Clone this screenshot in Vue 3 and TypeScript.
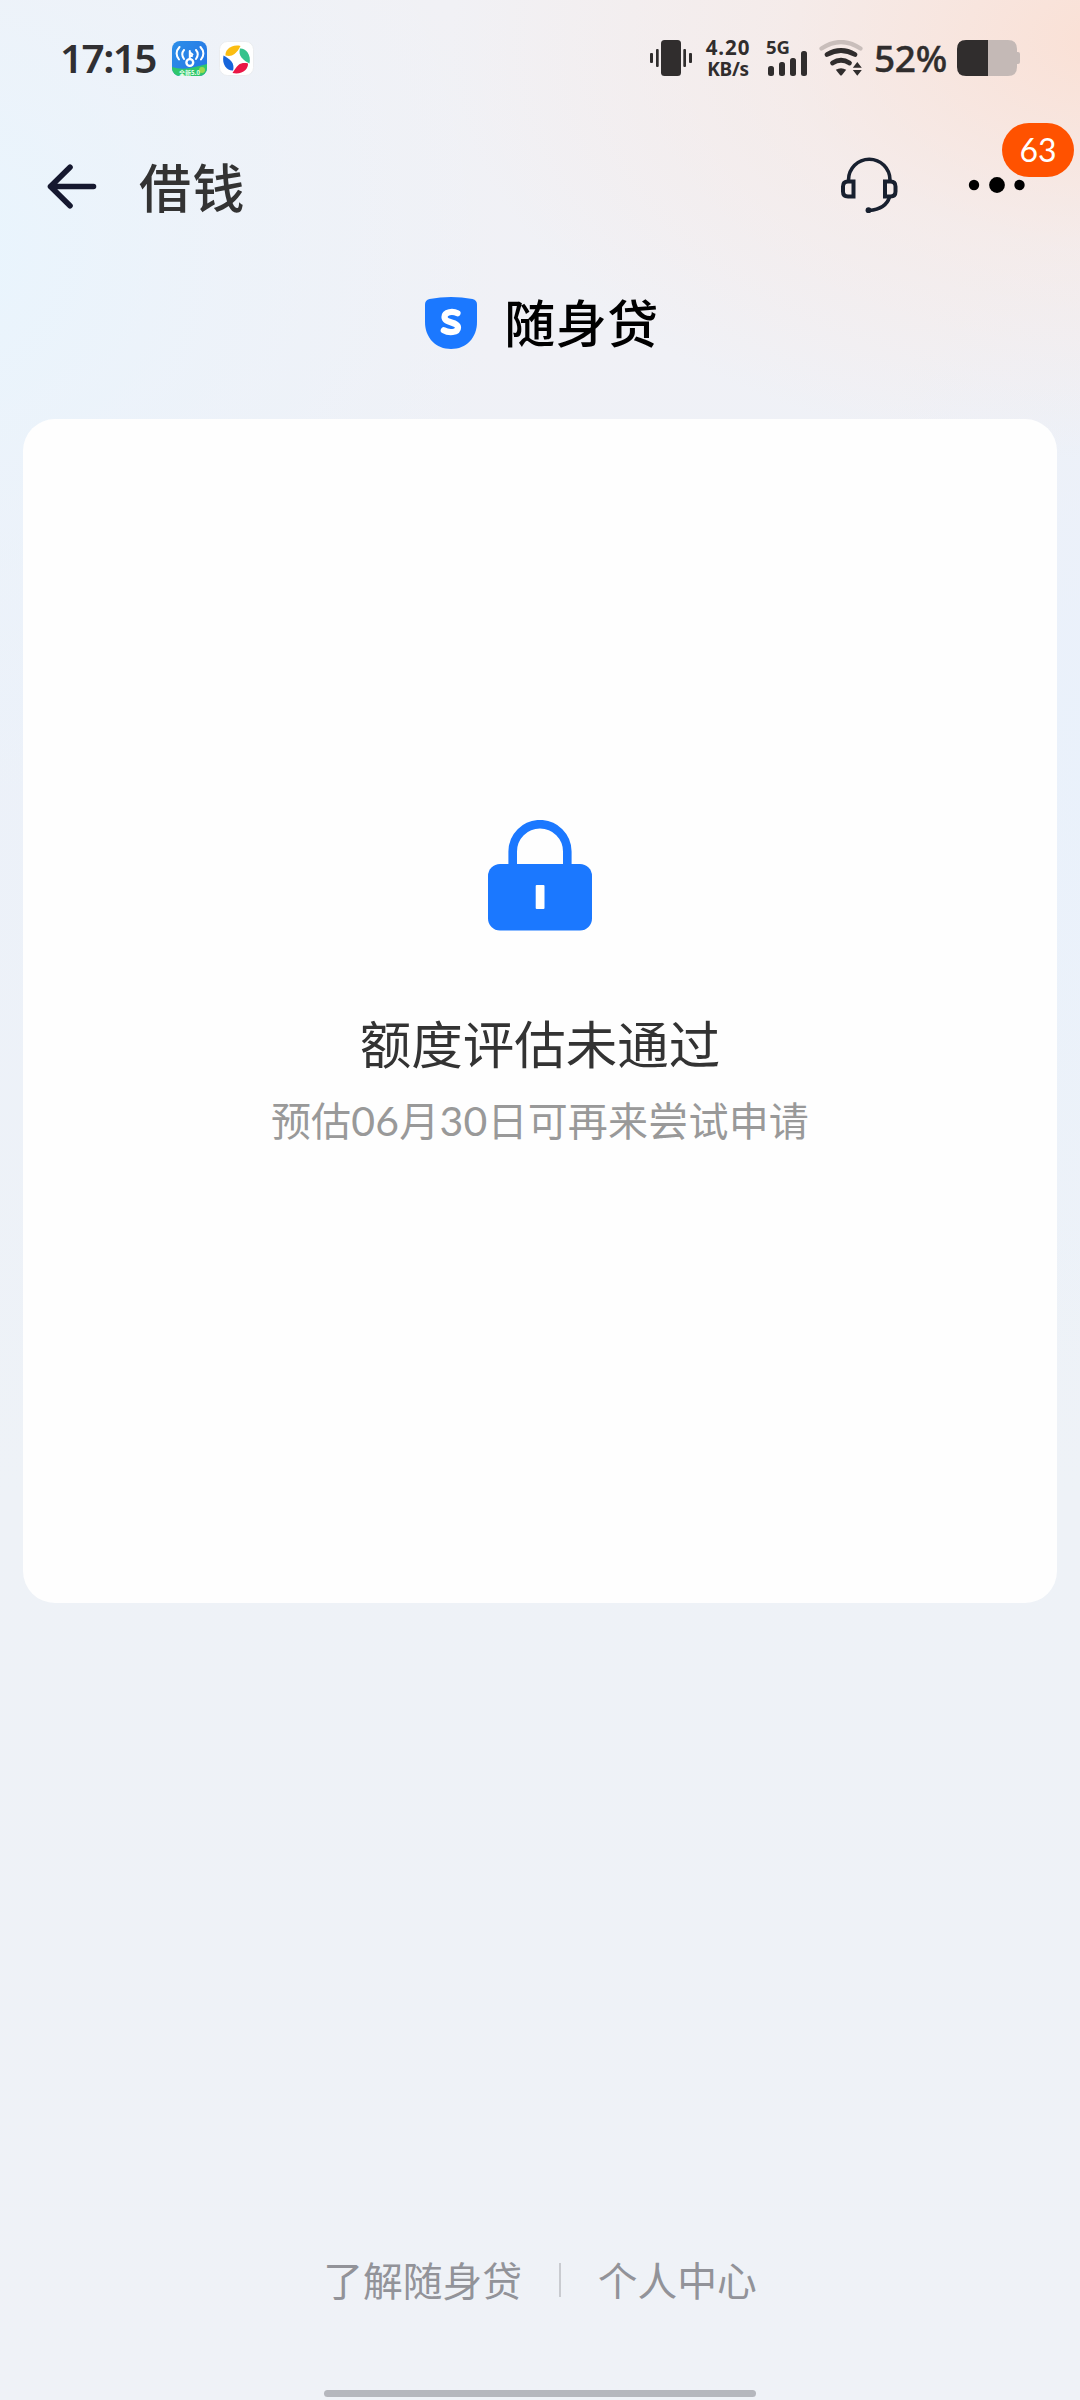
<script setup lang="ts">
const signalBars: number[] = [10, 14, 18, 25]
const links: string[] = ['了解随身贷', '个人中心']
const unread = 63
const battery = 52
</script>

<template>
  <div class="screen">
    <header class="status">
      <span class="time">17:15</span>
      <svg class="app-wifi" width="35" height="35" viewBox="0 0 35 35">
        <defs>
          <linearGradient id="wifiBlue" x1="0" y1="0" x2="1" y2="0.6">
            <stop offset="0" stop-color="#2d8fe8" />
            <stop offset="1" stop-color="#2678e6" />
          </linearGradient>
          <clipPath id="appClip"><rect width="35" height="35" rx="8" /></clipPath>
        </defs>
        <g clip-path="url(#appClip)">
          <rect width="35" height="35" fill="url(#wifiBlue)" />
          <path d="M0 26Q9 29 18 27Q28 25 35 23V35H0Z" fill="#2fc76c" />
          <circle cx="30" cy="29" r="3" fill="#9bd94e" />
          <g fill="none" stroke="#fff" stroke-width="2" stroke-linecap="round">
            <circle cx="17.8" cy="21.5" r="3.4" stroke-width="2.4" />
            <path d="M17.8 18V10M18 11.5L20.5 13.5M18 15H20" />
            <path d="M12 9Q8.5 13 12 18M7.5 6Q2 12 7 18.5M24 9Q27.500 13 24 18M28.500 6Q34 12 29 18.500" />
          </g>
          <text x="17.500" y="33.600" text-anchor="middle" class="app-tag">全新5.0</text>
        </g>
      </svg>
      <svg class="app-swirl" width="35" height="35" viewBox="0 0 35 35">
        <rect x="0.500" y="0.500" width="34" height="34" rx="8" fill="#fff" stroke="#ebedf0" />
        <path d="M6.500 14.500C6 9 12 3 21.500 5C20 8 18 11 15.500 13C13 15 10 15.500 6.500 14.500Z" fill="#fbbd12" />
        <path d="M21 7.500C26 7 32.500 13 30.500 22.500C27.500 21 24.500 19 22.500 16.500C20.500 14 20 11 21 7.500Z" fill="#35c28c" />
        <path d="M29 22.500C29.500 28 23.500 34 13.500 32C15.500 29 17 26 19.500 24C22 22 25.500 21.500 29 22.500Z" fill="#ea1745" />
        <path d="M14 29.500C8.500 30 2.500 24 4.500 14.500C7.500 16 10.500 18 12.500 20.500C14.500 23 15 26 14 29.500Z" fill="#1765db" />
      </svg>

      <div class="status-right">
        <svg class="vibrate" width="42" height="36" viewBox="0 0 42 36" fill="#302d2d">
          <rect x="11" width="20" height="36" rx="3.500" />
          <rect x="6" y="9" width="2.700" height="18" rx="1" />
          <rect x="0" y="13" width="3" height="10" rx="1" />
          <rect x="33.300" y="9" width="2.700" height="18" rx="1" />
          <rect x="39" y="13" width="3" height="10" rx="1" />
        </svg>
        <div class="speed">
          <span class="speed-value">4.20</span>
          <span class="speed-unit">KB/s</span>
        </div>
        <div class="cell">
          <span class="cell-type">5G</span>
          <div class="bars">
            <i v-for="h in signalBars" :key="h" :style="{ height: h + 'px' }"></i>
          </div>
        </div>
        <svg class="wifi" width="44" height="37" viewBox="0 0 44 37">
          <g fill="none" stroke="#302d2d" stroke-width="4.800" stroke-linecap="round">
            <path d="M2.500 8.500Q22 -4.500 41.500 8.500" stroke="#c9bebb" stroke-width="4.200" />
            <path d="M8 14.500Q22 6.500 36 14.500" />
            <path d="M13.500 23Q22 17.500 30.500 23" />
          </g>
          <path d="M16.800 29.800Q22 26.800 27.200 29.800L22.800 35.200Q22 36 21.200 35.200Z" fill="#302d2d" />
          <path d="M38.300 22L42.800 27.800H33.800ZM38.300 35.700L33.800 30H42.800Z" fill="#302d2d" />
        </svg>
        <span class="percent">{{ battery }}%</span>
        <svg class="battery" width="64" height="36" viewBox="0 0 64 36">
          <path d="M31 0H51Q60 0 60 9V27Q60 36 51 36H31Z" fill="#c4b9b6" />
          <path d="M60 12H61Q63 12 63 14V22Q63 24 61 24H60Z" fill="#c4b9b6" />
          <path d="M9 0H31V36H9Q0 36 0 27V9Q0 0 9 0Z" fill="#302d2d" />
        </svg>
      </div>
    </header>

    <nav class="nav">
      <svg class="back" width="50" height="46" viewBox="0 0 50 46" fill="none" stroke="#15182f" stroke-width="5.600" stroke-linecap="round" stroke-linejoin="round">
        <path d="M23 4.300L3.500 23.500L23 42.700M3.500 23.500H46.500" />
      </svg>
      <h1>借钱</h1>
      <div class="nav-right">
        <svg class="headset" width="58" height="58" viewBox="0 0 58 58" fill="none" stroke="#18202f" stroke-width="4">
          <path d="M8.500 24.500V23A20.500 20.500 0 0 1 50 23V24.500M49.500 40Q46 52 29 53.500" stroke-width="3.600" />
          <path d="M13.500 24.500V39.500H8Q3 39.500 3 34.500V29.500Q3 24.500 8 24.500ZM45 24.500V39.500H50.500Q55.500 39.500 55.500 34.500V29.500Q55.500 24.500 50.500 24.500Z" />
          <circle cx="28.500" cy="53.200" r="2.900" fill="#18202f" stroke="none" />
        </svg>
        <div class="more">
          <svg width="58" height="20" viewBox="0 0 58 20" fill="#000">
            <circle cx="6" cy="9" r="5.200" />
            <circle cx="29" cy="9" r="7.900" />
            <circle cx="51.500" cy="9" r="5.200" />
          </svg>
          <span class="badge">{{ unread }}</span>
        </div>
      </div>
    </nav>

    <section class="brand">
      <svg width="52" height="52" viewBox="0 0 52 52">
        <path d="M4.500 2Q26 -2 47.500 2Q52 3 52 7.500V25C52 41 41 52 26 52S0 41 0 25V7.500Q0 3 4.500 2Z" fill="#1b78ff" />
        <path d="M32.500 16.300C28 14 19.500 14.500 19.500 20C19.500 26.500 33 24.500 33 30.500C33 36 23.500 36 18.800 33.300" fill="none" stroke="#fff" stroke-width="6.200" stroke-linecap="round" stroke-linejoin="round" />
      </svg>
      <h2>随身贷</h2>
    </section>

    <main class="card">
      <svg class="lock" width="104" height="111" viewBox="0 0 104 111">
        <path d="M24.700 48V31.500A27.300 27.300 0 0 1 79.300 31.500V48" fill="none" stroke="#1b78ff" stroke-width="8.600" />
        <rect y="44" width="104" height="66.500" rx="12" fill="#1b78ff" />
        <rect x="47.700" y="65" width="8.800" height="24" rx="1" fill="#fff" />
      </svg>
      <p class="result">额度评估未通过</p>
      <p class="hint">预估<b>06</b>月<b>30</b>日可再来尝试申请</p>
    </main>

    <footer class="links">
      <a>{{ links[0] }}</a>
      <i></i>
      <a>{{ links[1] }}</a>
    </footer>
    <div class="home-bar"></div>
  </div>
</template>

<style>
body {
  margin: 0;
}
</style>

<style scoped>
.screen {
  width: 1080px;
  height: 2400px;
  overflow: hidden;
  display: flex;
  flex-direction: column;
  box-sizing: border-box;
  font-family: "Noto Sans CJK SC", sans-serif;
  background:
    radial-gradient(ellipse 660px 420px at 1110px 40px, rgba(252, 221, 207, 0.85), rgba(250, 228, 219, 0.42) 50%, rgba(248, 232, 226, 0) 100%),
    radial-gradient(ellipse 560px 560px at -60px 250px, rgba(232, 245, 254, 0.95), rgba(234, 244, 253, 0.5) 50%, rgba(236, 243, 251, 0) 100%),
    radial-gradient(ellipse 300px 600px at 1120px 780px, rgba(232, 241, 252, 0.7), rgba(232, 241, 252, 0) 100%),
    linear-gradient(180deg, #f1f1f5 0, #f0f1f6 350px, #ecf1f9 700px, #eef2f7 1500px, #eff2f7 2400px);
}
h1, h2, p {
  margin: 0;
  font-weight: 500;
  white-space: nowrap;
}
svg {
  display: block;
  flex: none;
}
.status {
  height: 116px;
  display: flex;
  align-items: center;
  padding: 0 59px 0 60px;
  flex: none;
}
.time {
  width: 112px;
  font: 600 40.500px/56px "Noto Sans", sans-serif;
  letter-spacing: -1.600px;
  color: #302f32;
  white-space: nowrap;
}
.app-swirl {
  margin-left: 12px;
}
.app-tag {
  font: 700 6px "Noto Sans CJK SC", sans-serif;
  fill: #effff0;
}
.status-right {
  display: flex;
  align-items: center;
  margin-left: auto;
  color: #302d2d;
  font-family: "Noto Sans", sans-serif;
  font-weight: 700;
}
.vibrate {
  margin-right: 12px;
}
.speed {
  width: 48px;
  display: flex;
  flex-direction: column;
  align-items: center;
}
.speed-value {
  letter-spacing: 0.900px;
  font-size: 20.500px;
  line-height: 21px;
}
.speed-unit {
  font-size: 19px;
  line-height: 22px;
  letter-spacing: -0.300px;
}
.cell {
  width: 42px;
  height: 36px;
  margin-left: 14px;
  display: flex;
  flex-direction: column;
  justify-content: space-between;
  position: relative;
}
.cell-type {
  font-size: 18.500px;
  line-height: 14px;
}
.bars {
  position: absolute;
  left: 2px;
  bottom: 0;
  display: flex;
  align-items: flex-end;
  gap: 4.600px;
}
.bars i {
  width: 6.400px;
  border-radius: 2.500px;
  background: #302d2d;
}
.wifi {
  margin-left: 11px;
}
.percent {
  width: 83px;
  margin-left: 11px;
  font: 500 37px/50px "Noto Sans", sans-serif;
  letter-spacing: -0.300px;
  white-space: nowrap;
  -webkit-text-stroke: 0.400px #302d2d;
}
.nav {
  height: 140px;
  flex: none;
  display: flex;
  align-items: center;
  padding: 0 54px 0 47px;
}
.nav h1 {
  margin-left: 42px;
  font-size: 52px;
  line-height: 76px;
  letter-spacing: 1.500px;
  color: #333;
}
.nav-right {
  margin-left: auto;
  display: flex;
  align-items: center;
}
.more {
  position: relative;
  margin-left: 70px;
}
.badge {
  position: absolute;
  left: 34px;
  top: -53px;
  width: 72px;
  height: 54px;
  border-radius: 27px;
  background: #ff5200;
  color: #fff;
  font: 400 32px/54px Lato, sans-serif;
  text-align: center;
}
.brand {
  height: 134px;
  flex: none;
  display: flex;
  justify-content: center;
  align-items: center;
  gap: 27px;
  padding-left: 4px;
}
.brand h2 {
  font-size: 51px;
  line-height: 74px;
  padding-bottom: 5px;
  letter-spacing: 0.500px;
  color: #000;
}
.card {
  width: 1034px;
  height: 1184px;
  margin: 29px auto 0;
  flex: none;
  border-radius: 32px;
  background: #fefefe;
  box-sizing: border-box;
  padding-top: 401px;
  display: flex;
  flex-direction: column;
  align-items: center;
}
.result {
  margin-top: 73px;
  font-size: 51.500px;
  line-height: 76px;
  font-weight: 400;
  color: #333;
}
.hint {
  margin-top: 10px;
  font-size: 40px;
  line-height: 58px;
  font-weight: 400;
  letter-spacing: 0.200px;
  color: #999;
}
.hint b {
  font: 400 41px/58px Lato, sans-serif;
}
.links {
  margin-top: 647px;
  height: 58px;
  flex: none;
  display: flex;
  justify-content: center;
  align-items: center;
  color: #929399;
  font-size: 39.800px;
  line-height: 58px;
}
.links i {
  width: 1.500px;
  height: 34px;
  margin: 2px 37px 0;
  background: #c9cbd0;
}
.home-bar {
  width: 432px;
  height: 7px;
  border-radius: 4px;
  background: #b5b7bd;
  margin: auto auto 3px;
}
</style>
